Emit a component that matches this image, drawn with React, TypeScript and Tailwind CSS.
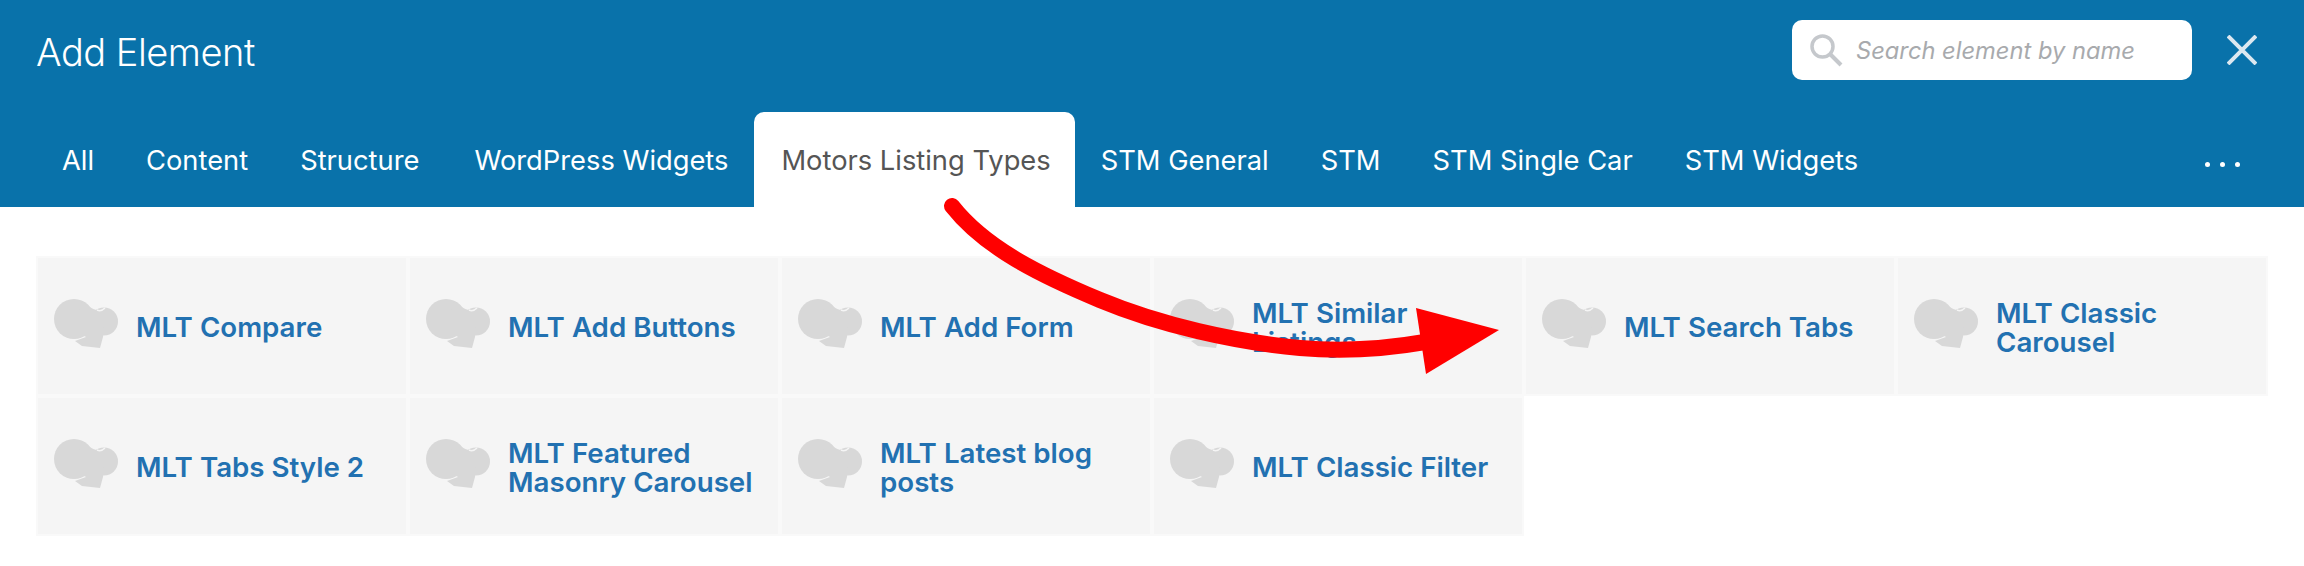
const font = "font-['Inter','Liberation_Sans',sans-serif]";

const tabs = [
  { label: "All", cls: "px-[26px] text-white" },
  { label: "Content", cls: "px-[26px] text-white" },
  { label: "Structure", cls: "pl-[26px] pr-[29px] text-white" },
  { label: "WordPress Widgets", cls: "px-[26px] text-white" },
  { label: "Motors Listing Types", cls: "rounded-t-[10px] bg-white pl-[27px] pr-[24px] text-[#555]" },
  { label: "STM General", cls: "px-[26px] text-white" },
  { label: "STM", cls: "px-[26px] text-white" },
  { label: "STM Single Car", cls: "px-[26px] text-white" },
  { label: "STM Widgets", cls: "px-[26px] text-white" },
];

const elements = [
  "MLT Compare",
  "MLT Add Buttons",
  "MLT Add Form",
  "MLT Similar Listings",
  "MLT Search Tabs",
  "MLT Classic Carousel",
  "MLT Tabs Style 2",
  "MLT Featured Masonry Carousel",
  "MLT Latest blog posts",
  "MLT Classic Filter",
];

const HatIcon = () => (
  <svg width="64" height="50" viewBox="0 0 64 50" className="shrink-0">
    <g fill="#d8d8d8">
      <circle cx="20" cy="20" r="20" />
      <circle cx="50" cy="22.5" r="14" />
      <path d="M28 2 C34 5 37 11 44 11 L50 30 L49 38 L46 49 L28 47 L21 42 L32 38 L20 30 Z" />
    </g>
    <path d="M43 11 C46 12.5 49 11 51 9" fill="none" stroke="#f5f5f5" strokeWidth="1.5" />
  </svg>
);

const Card = ({ name }: { name: string }) => (
  <div className="flex h-[140px] items-center gap-[18px] border-2 border-[#f9f9f9] bg-[#f5f5f5] pl-[15px] pr-[20px]">
    <div className="-mt-[4px] ml-[1px]"><HatIcon /></div>
    <span className="pt-[3px] text-[27.7px] font-semibold leading-[29px] text-[#2271b1]">{name}</span>
  </div>
);

export default function App() {
  return (
    <div className={`relative h-[566px] w-[2304px] overflow-hidden bg-white ${font}`}>
      <header className="flex h-[207px] flex-col justify-between bg-[#0972aa]">
        <div className="flex items-start justify-between pl-[36px] pr-[47px] pt-[20px]">
          <h1 className="mt-[10px] text-[38px] font-light leading-[45px] tracking-[-0.5px] text-white">Add Element</h1>
          <div className="flex items-center gap-[35px]">
            <div className="flex h-[60px] w-[400px] items-center gap-[13px] rounded-[10px] bg-white pl-[17px]">
              <svg width="34" height="34" viewBox="0 0 34 34" fill="none" stroke="#c5c8cc" strokeWidth="3.5" className="shrink-0">
                <circle cx="13.5" cy="13.5" r="10.5" />
                <path d="M21 21 L32 32" strokeWidth="4" />
              </svg>
              <span className="pt-[2px] text-[23.7px] italic text-[#a8aaad]">Search element by name</span>
            </div>
            <svg width="30" height="30" viewBox="0 0 30 30" stroke="#dce8f0" strokeWidth="4" className="shrink-0">
              <path d="M1 1 L29 29 M29 1 L1 29" />
            </svg>
          </div>
        </div>
        <nav className="flex items-end justify-between pl-[36px] pr-[64px]">
          <div className="flex">
            {tabs.map((tab) => (
              <div key={tab.label} className={`flex h-[95px] items-center pt-[3px] text-[27.3px] ${tab.cls}`}>{tab.label}</div>
            ))}
          </div>
          <div className="flex h-[95px] items-center gap-[10px] pt-[10px]">
            <span className="h-[5px] w-[5px] rounded-full bg-white" />
            <span className="h-[5px] w-[5px] rounded-full bg-white" />
            <span className="h-[5px] w-[5px] rounded-full bg-white" />
          </div>
        </nav>
      </header>

      <main className="grid grid-cols-6 px-[36px] pt-[49px]">
        {elements.map((name) => (
          <Card key={name} name={name} />
        ))}
      </main>

      {/* red annotation arrow */}
      <svg className="absolute left-0 top-0 pointer-events-none" width="2304" height="566" viewBox="0 0 2304 566">
        <path d="M952 206 C985 248 1040 275 1100 300 C1160 325 1235 342 1300 348 C1345 352 1385 349 1425 342" fill="none" stroke="#ff0000" strokeWidth="16" strokeLinecap="round" />
        <path d="M1416 308 L1499 330 L1426 374 Z" fill="#ff0000" />
      </svg>
    </div>
  );
}
